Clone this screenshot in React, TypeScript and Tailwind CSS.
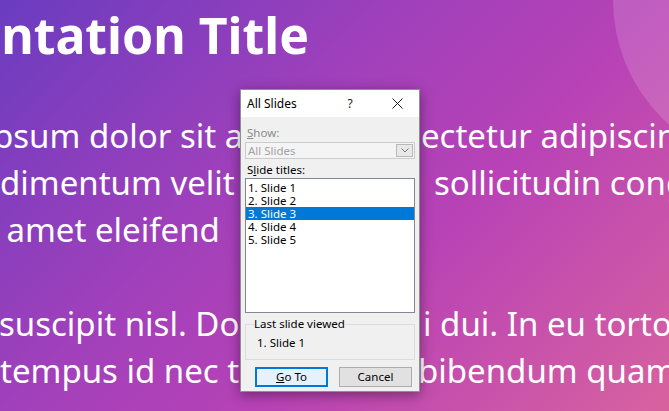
const para1 = [
  { left: "psum dolor sit amet, ", right: "consectetur adipiscing elit.", box: "ml-[-7px] w-[356px]" },
  { left: "dimentum velit ut ligula, ", right: "sollicitudin congue.", box: "ml-[0px] w-[434px]" },
  { left: "t amet eleifend", right: "", box: "ml-[-14px] w-[400px]" },
];

const para2 = [
  { left: "suscipit nisl. Donec nis", right: "i dui. In eu tortor.", box: "ml-[-1px] w-[424px]" },
  { left: "tempus id nec tellus et ", right: "bibendum quam.", box: "ml-[0px] w-[418px]" },
];

const slides = ["1. Slide 1", "2. Slide 2", "3. Slide 3", "4. Slide 4", "5. Slide 5"];

type Row = { left: string; right: string; box: string };

const TextRow = ({ row }: { row: Row }) => (
  <div className="flex whitespace-nowrap">
    <span className={`shrink-0 ${row.box}`}>{row.left}</span>
    <span className="shrink-0">{row.right}</span>
  </div>
);

const AllSlidesDialog = () => (
  <div className="absolute left-[240px] top-[89px] w-[180px] border border-[#8f8f8f] bg-[#f0f0f0] font-['Noto_Sans',sans-serif] text-[11.5px] text-black shadow-[0_3px_12px_rgba(0,0,0,0.4)]">
    <div className="flex h-[27px] items-center bg-white pl-[6px]">
      <span className="text-[12px]">All Slides</span>
      <span className="ml-auto flex w-[20px] justify-center text-[12px] text-[#222]">?</span>
      <span className="ml-[27px] mr-[12px] flex w-[20px] justify-center">
        <svg width="11" height="11" viewBox="0 0 11 11" fill="none" stroke="#1a1a1a" strokeWidth="1">
          <path d="M0.5 0.5L10.5 10.5M10.5 0.5L0.5 10.5" />
        </svg>
      </span>
    </div>

    <div className="px-[4px] pb-[4px]">
      <div className="pl-[2px] pt-[9px] leading-[14px] text-[#8b8b8b]">
        <span className="underline">S</span>how:
      </div>

      <div className="mt-[2px] flex h-[17px] items-center border border-[#cccccc] bg-[#f4f4f4]">
        <span className="pl-[2px] text-[#a3a3a3]">All Slides</span>
        <span className="ml-auto mr-[1px] flex h-[13px] w-[17px] items-center justify-center border border-[#b9b9b9] bg-[#e8e8e8]">
          <svg width="8" height="5" viewBox="0 0 8 5" fill="none" stroke="#7a7a7a" strokeWidth="1">
            <path d="M0.5 0.5L4 4L7.5 0.5" />
          </svg>
        </span>
      </div>

      <div className="mt-[4px] pl-[2px] leading-[14px]">
        S<span className="underline">l</span>ide titles:
      </div>

      <div className="mt-[1px] h-[135px] border border-[#828790] bg-white pt-[2px]">
        {slides.map((s, i) => (
          <div
            key={s}
            className={
              i === 2
                ? "h-[13px] bg-[#0078d7] pl-[2px] leading-[13px] text-white"
                : "h-[13px] pl-[2px] leading-[13px]"
            }
          >
            {s}
          </div>
        ))}
      </div>

      <fieldset className="mt-[4px] border border-[#dcdcdc] pb-[9px]">
        <legend className="ml-[8px] leading-[14px]">Last slide viewed</legend>
        <div className="pl-[11px] pt-[5px] leading-[14px]">1. Slide 1</div>
      </fieldset>

      <div className="mt-[7px] flex gap-[11px] pl-[10px]">
        <button className="flex h-[20px] w-[73px] items-center justify-center border-2 border-[#0078d7] bg-[#e5f1fb]">
          <span>
            <span className="underline">G</span>o To
          </span>
        </button>
        <button className="flex h-[20px] w-[73px] items-center justify-center border border-[#adadad] bg-[#e1e1e1]">
          Cancel
        </button>
      </div>
    </div>
  </div>
);

export default function App() {
  return (
    <div className="relative h-[411px] w-[669px] overflow-hidden bg-[linear-gradient(135deg,#6a3cc0_0%,#a040bb_38%,#b842b6_62%,#d8629f_100%)] font-['Noto_Sans',sans-serif] text-white">
      <div className="absolute left-[613px] top-[-167px] h-[334px] w-[334px] rounded-full bg-white/15" />

      <h1 className="ml-[-136px] mt-[10px] whitespace-nowrap text-[50px] font-bold leading-none">
        Presentation Title
      </h1>

      <div className="mt-[52px] text-[33px] leading-[47px]">
        {para1.map((row) => (
          <TextRow key={row.left} row={row} />
        ))}
        <div className="mt-[47px]">
          {para2.map((row) => (
            <TextRow key={row.left} row={row} />
          ))}
        </div>
      </div>

      <AllSlidesDialog />
    </div>
  );
}
